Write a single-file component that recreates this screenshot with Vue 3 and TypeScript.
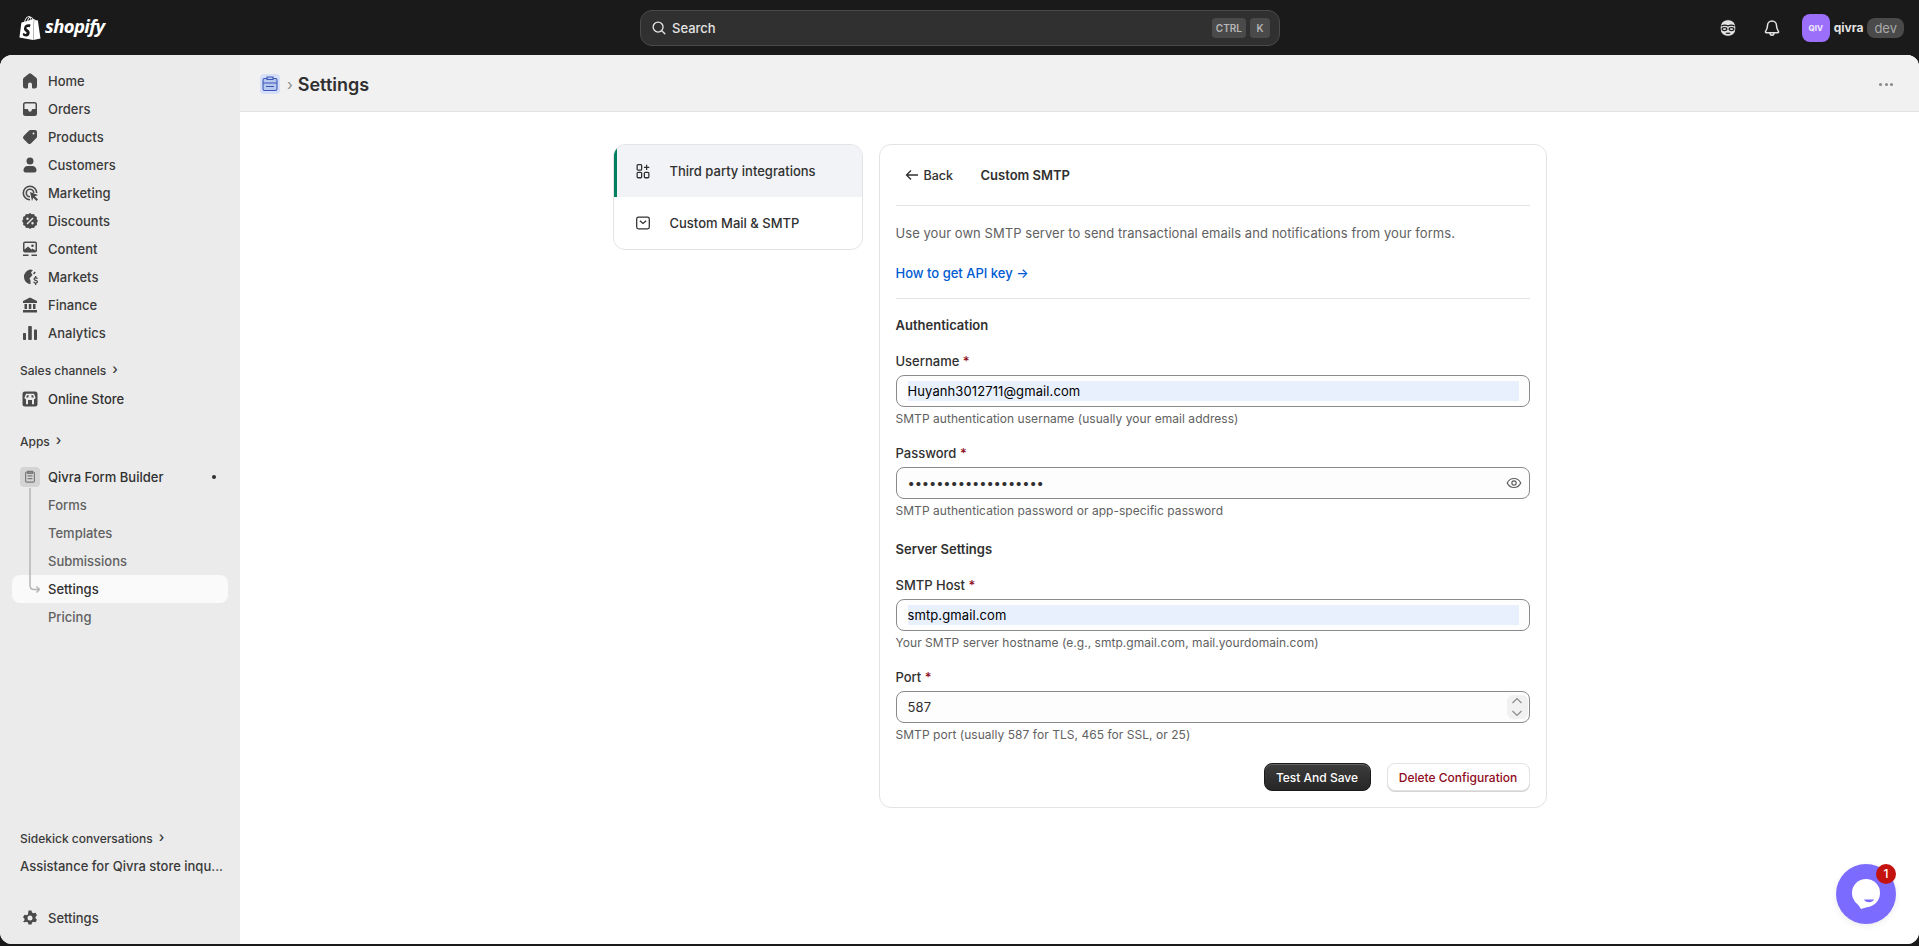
<template>
  <div class="shell">
    <header class="topbar">
      <div class="brand">
        <svg class="bag" viewBox="0 0 24 24"><path d="M15.337 23.979l7.216-1.561s-2.604-17.613-2.625-17.73c-.018-.116-.114-.192-.211-.192s-1.929-.136-1.929-.136-1.275-1.274-1.439-1.411c-.045-.037-.075-.057-.121-.074l-.914 21.104h.023zM11.71 11.305s-.81-.424-1.774-.424c-1.447 0-1.504.906-1.504 1.141 0 1.232 3.24 1.715 3.24 4.629 0 2.295-1.44 3.76-3.406 3.76-2.354 0-3.54-1.465-3.54-1.465l.646-2.086s1.245 1.066 2.28 1.066c.675 0 .975-.545.975-.932 0-1.619-2.654-1.694-2.654-4.359-.034-2.237 1.571-4.416 4.827-4.416 1.257 0 1.875.361 1.875.361l-.945 2.715-.02.01zM11.17.83c.136 0 .271.038.405.135-.984.465-2.064 1.639-2.508 3.992-.656.213-1.293.405-1.889.578C7.697 3.75 8.951.84 11.17.84V.83zm1.235 2.949v.135c-.754.232-1.583.484-2.394.736.466-1.777 1.333-2.645 2.085-2.971.193.501.309 1.176.309 2.1zm.539-2.234c.694.074 1.141.867 1.429 1.755-.349.114-.735.231-1.158.366v-.252c0-.752-.096-1.371-.271-1.871v.002zm2.992 1.289c-.02 0-.06.021-.078.021s-.289.075-.714.21c-.423-1.233-1.176-2.37-2.508-2.37h-.115C12.135.209 11.669 0 11.265 0 8.159 0 6.675 3.877 6.21 5.846c-1.194.365-2.063.636-2.16.674-.675.213-.694.232-.772.87-.075.462-1.83 14.063-1.83 14.063L15.009 24l.927-21.166z" /></svg>
        <span class="wordmark">shopify</span>
      </div>
      <div class="search">
        <svg class="search-icon" viewBox="0 0 20 20"><circle cx="9" cy="9" r="5.500" /><path d="M13 13l3.500 3.500" /></svg>
        <span class="search-text">Search</span>
        <kbd class="key">CTRL</kbd>
        <kbd class="key">K</kbd>
      </div>
      <div class="top-right">
        <svg class="face" viewBox="0 0 20 20">
          <rect x="2.800" y="2.500" width="14.400" height="15" rx="6.500" fill="#e3e3e3" />
          <path d="M4 8.200c2.200-1.200 4-1.200 6 0 2-1.200 3.800-1.200 6 0" />
          <ellipse cx="6.800" cy="11" rx="2.200" ry="1.400" />
          <ellipse cx="13.200" cy="11" rx="2.200" ry="1.400" />
          <path d="M8 14.800h4" />
        </svg>
        <svg class="bell" viewBox="0 0 20 20"><path d="M10 3a4.500 4.500 0 0 0-4.500 4.500c0 3.500-1.500 5-2 6-.3.700.2 1.200.8 1.200h11.400c.6 0 1.100-.5.8-1.200-.5-1-2-2.500-2-6A4.500 4.500 0 0 0 10 3z" /><path d="M8 15c0 1.300.9 2.200 2 2.200s2-.9 2-2.200" /></svg>
        <div class="avatar">QIV</div>
        <span class="store">qivra</span>
        <span class="dev">dev</span>
      </div>
    </header>

    <div class="frame">
      <aside class="sidebar">
        <a v-for="item in mainNav" :key="item.label" class="nav-item">
          <svg class="nav-icon" viewBox="0 0 20 20"><path fill-rule="evenodd" :d="item.d" /></svg>
          {{ item.label }}
        </a>

        <div class="nav-head sales">Sales channels <span class="head-arrow">›</span></div>
        <a class="nav-item strong">
          <svg class="nav-icon" viewBox="0 0 20 20"><path fill-rule="evenodd" d="M5 2.500h10A2.500 2.500 0 0 1 17.500 5v10a2.500 2.500 0 0 1-2.500 2.500H5A2.500 2.500 0 0 1 2.500 15V5A2.500 2.500 0 0 1 5 2.500zM6 4.800 4.500 8.500c0 1 .8 1.700 1.500 1.700V15.200h8V10.200c.7 0 1.500-.7 1.500-1.700L14 4.800zM7 6.200h1.700L8.300 8.600H6.100zM11.300 6.200H13l.9 2.400h-2.200zM8 11h4v4.200H8z" /></svg>
          Online Store
        </a>

        <div class="nav-head apps">Apps <span class="head-arrow">›</span></div>
        <div class="app-group">
          <a class="nav-item strong">
            <span class="app-icon">
              <svg viewBox="0 0 20 20"><rect x="4.500" y="4" width="11" height="12.500" rx="1.500" /><path d="M7 3h6v2.500H7zM7 8.500h6M7 12h6" /></svg>
            </span>
            Qivra Form Builder
            <span class="pin"></span>
          </a>
          <a v-for="sub in subNav" :key="sub" class="nav-item sub" :class="{ active: sub === 'Settings' }">{{ sub }}</a>
          <svg class="tree" viewBox="0 0 20 112" width="20" height="112"><path d="M10 0v97c0 3 1.500 4.500 4 4.500h5M16.500 98.500l3 3-3 3" /></svg>
        </div>

        <div class="nav-spacer"></div>

        <div class="nav-head">Sidekick conversations <span class="head-arrow">›</span></div>
        <div class="conversation">Assistance for Qivra store inqu...</div>
        <a class="nav-item settings-link">
          <svg class="nav-icon" viewBox="0 0 20 20"><path fill-rule="evenodd" d="M8.500 2.500h3l.5 2 1.500.8 2-.6 1.500 2.600-1.500 1.400v1.600l1.500 1.400-1.500 2.600-2-.6-1.500.8-.5 2h-3l-.5-2-1.500-.8-2 .6L3 13.700l1.500-1.400v-1.600L3 9.300l1.500-2.600 2 .6L8 6.500zM10 7.500a2.500 2.500 0 1 0 0 5 2.500 2.500 0 0 0 0-5z" /></svg>
          Settings
        </a>
      </aside>

      <main class="main">
        <div class="page-head">
          <span class="crumb-icon">
            <svg viewBox="0 0 20 20"><rect x="3" y="4.500" width="14" height="12" rx="1.500" /><path d="M7 3h6v2.500H7zM3 9h14M6 12.500h8" /></svg>
          </span>
          <span class="crumb-sep">›</span>
          <h1 class="page-title">Settings</h1>
          <span class="page-dots"><i></i><i></i><i></i></span>
        </div>

        <div class="content">
          <nav class="side-card">
            <a class="side-row current">
              <svg class="side-icon" viewBox="0 0 20 20"><rect x="3.500" y="3" width="5" height="6" rx="1" /><rect x="3.500" y="11.500" width="5" height="6" rx="1" /><rect x="11.500" y="11.500" width="5" height="6" rx="1" /><path d="M14 3v6M11 6h6" /></svg>
              Third party integrations
            </a>
            <a class="side-row">
              <svg class="side-icon" viewBox="0 0 20 20"><rect x="3" y="3.500" width="14" height="13" rx="2" /><path d="M6.500 7.500 10 10.500l3.500-3" /></svg>
              Custom Mail &amp; SMTP
            </a>
          </nav>

          <section class="card">
            <div class="card-head">
              <a class="back">
                <svg viewBox="0 0 16 16"><path d="M14 8H2.500M7 3.500 2.500 8 7 12.500" /></svg>
                Back
              </a>
              <h2 class="card-title">Custom SMTP</h2>
            </div>

            <p class="intro">Use your own SMTP server to send transactional emails and notifications from your forms.</p>
            <a class="api-link">How to get API key →</a>
            <hr class="rule" />

            <h3 class="section first">Authentication</h3>
            <div class="field">
              <label class="label">Username <span class="req">*</span></label>
              <div class="input-box"><input class="input filled" value="Huyanh3012711@gmail.com" readonly /></div>
              <div class="help">SMTP authentication username (usually your email address)</div>
            </div>
            <div class="field">
              <label class="label">Password <span class="req">*</span></label>
              <div class="input-box">
                <input class="input secret" type="password" value="Huyanh3012711passwd" readonly />
                <svg class="eye" viewBox="0 0 20 20"><path d="M2.500 10C4 6.800 6.700 5 10 5s6 1.800 7.500 5c-1.500 3.200-4.200 5-7.500 5s-6-1.800-7.500-5z" /><circle cx="10" cy="10" r="2.400" /></svg>
              </div>
              <div class="help">SMTP authentication password or app-specific password</div>
            </div>

            <h3 class="section">Server Settings</h3>
            <div class="field">
              <label class="label">SMTP Host <span class="req">*</span></label>
              <div class="input-box"><input class="input filled" value="smtp.gmail.com" readonly /></div>
              <div class="help">Your SMTP server hostname (e.g., smtp.gmail.com, mail.yourdomain.com)</div>
            </div>
            <div class="field">
              <label class="label">Port <span class="req">*</span></label>
              <div class="input-box">
                <input class="input" value="587" readonly />
                <span class="stepper">
                  <svg viewBox="0 0 12 12"><path d="M1.500 8 6 3.500 10.500 8" /></svg>
                  <svg viewBox="0 0 12 12"><path d="M1.500 4 6 8.500 10.500 4" /></svg>
                </span>
              </div>
              <div class="help">SMTP port (usually 587 for TLS, 465 for SSL, or 25)</div>
            </div>

            <div class="actions">
              <button class="btn btn-dark">Test And Save</button>
              <button class="btn btn-danger">Delete Configuration</button>
            </div>
          </section>
        </div>

        <div class="chat">
          <svg viewBox="0 0 60 60" width="60" height="60"><circle cx="30" cy="29" r="14" fill="#fff" /><path d="M21 39l4 6 10-3z" fill="#fff" /><path d="M28 35.500h10c-.8 1.800-2.800 2.800-5 2.800s-4.200-1-5-2.800z" fill="#7b6cff" /></svg>
          <span class="chat-badge">1</span>
        </div>
      </main>
    </div>
  </div>
</template>

<script setup lang="ts">
interface NavLink {
  label: string
  d: string
}

// polaris-like icons, drawn on a 20 box
const mainNav: NavLink[] = [
  { label: 'Home', d: 'M8.800 2.800a2 2 0 0 1 2.400 0l5 4c.5.400.8 1 .8 1.600V15a2.500 2.500 0 0 1-2.500 2.500H13a1 1 0 0 1-1-1V13.500a2 2 0 0 0-4 0v3a1 1 0 0 1-1 1H5.500A2.500 2.500 0 0 1 3 15V8.400c0-.6.300-1.200.8-1.600z' },
  { label: 'Orders', d: 'M5.500 3h9A2.500 2.500 0 0 1 17 5.500v9a2.500 2.500 0 0 1-2.500 2.500h-9A2.500 2.500 0 0 1 3 14.500v-9A2.500 2.500 0 0 1 5.500 3zM5.500 4.500a1 1 0 0 0-1 1V10h2.700c.6 0 1 .4 1.100 1a1.700 1.700 0 0 0 3.400 0c.1-.6.500-1 1.100-1h2.700V5.500a1 1 0 0 0-1-1z' },
  { label: 'Products', d: 'M10.500 3H15a2 2 0 0 1 2 2v4.500c0 .5-.2 1-.6 1.400l-5.500 5.500a2 2 0 0 1-2.800 0l-4.500-4.500a2 2 0 0 1 0-2.800l5.500-5.500c.4-.4.900-.6 1.400-.6zM13.500 5.500a1 1 0 1 0 0 2 1 1 0 0 0 0-2z' },
  { label: 'Customers', d: 'M10 2.500a3.500 3.500 0 1 1 0 7 3.500 3.500 0 0 1 0-7zM7.500 11h5c2.200 0 4 1.800 4 4v.500c0 1.100-.9 2-2 2h-9c-1.100 0-2-.9-2-2V15c0-2.200 1.800-4 4-4z' },
  { label: 'Marketing', d: 'M10 2.500a7.500 7.500 0 0 1 7.500 7.500h-1.600A5.900 5.900 0 1 0 10 15.900v1.600A7.500 7.500 0 0 1 10 2.500zM10 5.500a4.500 4.500 0 0 1 4.500 4.500h-1.600A2.900 2.900 0 1 0 10 12.900v1.600a4.500 4.500 0 0 1 0-9zM10 9l8 3-3.200 1.200L18 16.500 16.500 18l-3.200-3.200L12 18z' },
  { label: 'Discounts', d: 'M10 2l1.800 1.200 2.200-.2.900 2 2 .9-.2 2.200L18 10l-1.200 1.800.2 2.200-2 .9-.9 2-2.200-.2L10 18l-1.800-1.200-2.200.2-.9-2-2-.9.2-2.200L2 10l1.200-1.800L3 6l2-.9.9-2 2.200.2zM12.500 6.500 6.500 12.500l1 1 6-6zM7.500 6.500a1.200 1.200 0 1 0 0 2.400 1.200 1.200 0 0 0 0-2.400zM12.500 11.100a1.200 1.200 0 1 0 0 2.400 1.200 1.200 0 0 0 0-2.400z' },
  { label: 'Content', d: 'M5 2.500h10A2 2 0 0 1 17 4.500v7a2 2 0 0 1-2 2H5a2 2 0 0 1-2-2v-7a2 2 0 0 1 2-2zM4.500 10.500 8 7.500l3.500 3 1-1 3 2v-7a.5.5 0 0 0-.5-.5H5a.5.5 0 0 0-.5.5zM12.500 5.500a1.300 1.300 0 1 0 0 2.600 1.300 1.300 0 0 0 0-2.600zM3 15.500h5.500V17H3zM11.500 15.500H17V17h-5.500z' },
  { label: 'Markets', d: 'M10 2.500c1 0 2 .2 2.900.6L11 5.500l1.500 2.500-3 3.500 1 2v3.800A7.500 7.500 0 0 1 10 2.500zM14.600 4.500 15.800 5.500 14 7.500l-1-1.200zM15 9h1.300v1.200c.9.200 1.500.7 1.700 1.400l-1.200.5c-.2-.4-.5-.7-1.100-.7-.6 0-.9.200-.9.600 0 .4.400.5 1 .7 1 .3 2.200.7 2.200 2 0 1-.7 1.600-1.700 1.800V18H15v-1.500c-.9-.2-1.600-.8-1.800-1.600l1.200-.5c.2.600.6 1 1.300 1 .6 0 1-.3 1-.7 0-.5-.5-.6-1.200-.8-1-.3-2-.7-2-1.900 0-1 .7-1.600 1.500-1.800z' },
  { label: 'Finance', d: 'M10 2.500l7 3.500v2H3V6zM4.500 9h2.500v5H4.500zM8.800 9h2.500v5H8.800zM13 9h2.500v5H13zM3 15h14v2.500H3z' },
  { label: 'Analytics', d: 'M9 3h2a.8.800 0 0 1 .8.800v12.400a.8.800 0 0 1-.8.800H9a.8.800 0 0 1-.8-.8V3.800A.8.800 0 0 1 9 3zM14.800 6.500h1.400a.8.800 0 0 1 .8.800v8.900a.8.800 0 0 1-.8.800h-1.400a.8.800 0 0 1-.8-.8V7.300a.8.800 0 0 1 .8-.8zM3.800 10h1.400a.8.800 0 0 1 .8.800v5.400a.8.800 0 0 1-.8.800H3.800a.8.800 0 0 1-.8-.8v-5.400a.8.800 0 0 1 .8-.8z' }
]

const subNav: string[] = ['Forms', 'Templates', 'Submissions', 'Settings', 'Pricing']
</script>

<style>
html, body { margin: 0; height: 100%; overflow: hidden; background: #1a1a1a; }
</style>

<style scoped>
.shell { height: 946px; display: flex; flex-direction: column; background: #1a1a1a; font-family: Inter, "Noto Sans", sans-serif; font-size: 13px; color: #303030; }

.topbar { height: 55px; flex: none; display: flex; align-items: center; position: relative; padding: 0 15px 0 20px; }
.brand { display: flex; align-items: center; gap: 3px; width: 620px; color: #fff; }
.bag { width: 24px; height: 24px; fill: #fff; margin-left: -2px; }
.wordmark { font-family: "Open Sans", sans-serif; font-style: italic; font-weight: 700; font-size: 18.500px; letter-spacing: -0.6px; margin-top: -4px; }
.search { width: 640px; height: 36px; box-sizing: border-box; background: #303030; border: 1px solid #4a4a4a; border-radius: 12px; display: flex; align-items: center; gap: 4px; padding: 0 9px 0 9px; color: #e3e3e3; }
.search-icon { width: 18px; height: 18px; fill: none; stroke: #e3e3e3; stroke-width: 1.500; stroke-linecap: round; }
.search-text { flex: 1; font-size: 13px; font-weight: 500; }
.key { font-family: Inter, sans-serif; font-size: 10px; font-weight: 600; color: #b5b5b5; background: #4a4a4a; height: 20px; line-height: 20px; padding: 0 4px; border-radius: 4px; min-width: 12px; text-align: center; margin-left: 0; }
.top-right { margin-left: auto; display: flex; align-items: center; color: #e3e3e3; }
.face { width: 22px; height: 22px; fill: none; stroke: #1a1a1a; stroke-width: 1.100; margin-right: 23px; }
.bell { width: 20px; height: 20px; fill: none; stroke: #e3e3e3; stroke-width: 1.500; margin-right: 20px; }
.avatar { width: 28px; height: 28px; border-radius: 8px; background: #9c6ffb; color: #f3eeff; font-size: 8px; font-weight: 700; display: flex; align-items: center; justify-content: center; }
.store { margin-left: 4px; font-size: 12px; font-weight: 650; color: #e3e3e3; }
.dev { margin-left: 4px; background: #4a4a4a; color: #a9a9a9; height: 20px; line-height: 20px; padding: 0 7px; border-radius: 8px; }

.frame { flex: 1; display: flex; margin-bottom: 2px; border-radius: 12px; overflow: hidden; background: #fff; }

.sidebar { width: 240px; flex: none; box-sizing: border-box; background: #ebebeb; padding: 12px 12px 12px; display: flex; flex-direction: column; }
.nav-item { height: 28px; flex: none; box-sizing: border-box; display: flex; align-items: center; gap: 8px; padding: 0 8px; border-radius: 8px; font-weight: 500; color: #3a3a3a; }
.nav-item.strong { font-weight: 550; color: #303030; }
.nav-icon { width: 20px; height: 20px; flex: none; fill: #4a4a4a; }
.nav-head { height: 28px; flex: none; display: flex; align-items: center; gap: 6px; padding: 0 8px; font-size: 12px; font-weight: 550; color: #3a3a3a; }
.head-arrow { font-size: 14px; line-height: 14px; margin-top: -2px; }
.sales { margin-top: 9px; margin-bottom: 1px; }
.apps { margin-top: 14px; margin-bottom: 8px; }
.app-group { position: relative; display: flex; flex-direction: column; }
.app-icon { width: 16px; height: 16px; padding: 2px; background: #d4d4d4; border-radius: 4px; display: block; flex: none; }
.app-icon svg { width: 16px; height: 16px; display: block; fill: none; stroke: #7a7a7a; stroke-width: 1.500; }
.pin { width: 4px; height: 4px; border-radius: 50%; background: #303030; margin-left: auto; margin-right: 4px; }
.sub { padding-left: 36px; color: #616161; font-weight: 450; }
.sub.active { background: #fafafa; color: #303030; font-weight: 550; }
.tree { position: absolute; left: 8px; top: 25px; fill: none; stroke: #b5b5b5; stroke-width: 1.500; }
.nav-spacer { flex: 1; }
.conversation { height: 28px; flex: none; line-height: 28px; padding: 0 8px; font-weight: 500; white-space: nowrap; color: #3a3a3a; }
.settings-link { margin-top: 24px; }

.main { flex: 1; min-width: 0; position: relative; background: #fff; }
.page-head { height: 54px; padding: 2px 26px 0 20px; border-bottom: 1px solid #e3e3e3; background: #f1f1f1; display: flex; align-items: center; }
.crumb-icon { width: 20px; height: 20px; background: #d5e0f8; border-radius: 4px; display: block; }
.crumb-icon svg { width: 20px; height: 20px; fill: #b8c9f0; stroke: #3b55b8; stroke-width: 1.100; display: block; }
.crumb-sep { margin: 0 5px 0 7px; color: #8a8a8a; font-size: 15px; }
.page-title { margin: 0; font-size: 18px; font-weight: 600; color: #303030; }
.page-dots { margin-left: auto; display: flex; gap: 2.500px; }
.page-dots i { width: 3px; height: 3px; border-radius: 50%; background: #8a8a8a; }

.content { display: flex; justify-content: center; align-items: flex-start; gap: 16px; padding-top: 32px; }
.side-card { width: 250px; box-sizing: border-box; border: 1px solid #e3e3e3; border-radius: 12px; background: #fff; overflow: hidden; }
.side-row { height: 52px; box-sizing: border-box; display: flex; align-items: center; gap: 18px; padding-left: 20px; color: #303030; font-weight: 500; }
.side-row.current { background: #f1f3f6; border-left: 3px solid #008060; padding-left: 17px; }
.side-icon { width: 18px; height: 18px; fill: none; stroke: #303030; stroke-width: 1.400; flex: none; }

.card { width: 668px; box-sizing: border-box; border: 1px solid #e3e3e3; border-radius: 12px; background: #fff; padding: 16px; }
.card-head { display: flex; align-items: center; height: 28px; padding-bottom: 16px; border-bottom: 1px solid #e3e3e3; }
.back { display: flex; align-items: center; gap: 4px; width: 85px; padding-left: 8px; box-sizing: border-box; font-size: 12.500px; font-weight: 500; color: #303030; }
.back svg { width: 16px; height: 16px; fill: none; stroke: #303030; stroke-width: 1.300; }
.card-title { margin: 0; font-size: 13px; font-weight: 600; color: #303030; }
.intro { margin: 17px 0 0; line-height: 20px; color: #616161; letter-spacing: 0.05px; }
.api-link { display: block; margin-top: 20px; line-height: 20px; color: #005bd3; font-weight: 500; }
.rule { margin: 15px 0 0; border: 0; border-top: 1px solid #e3e3e3; }
.section { margin: 20px 0 0; font-size: 13px; line-height: 20px; font-weight: 600; color: #303030; }
.section.first { margin-top: 16px; }
.field { margin-top: 16px; }
.label { display: block; line-height: 20px; margin-bottom: 4px; color: #303030; font-weight: 450; }
.req { color: #8e0b21; }
.input-box { height: 32px; box-sizing: border-box; border: 1px solid #8a8a8a; border-radius: 8px; background: #fdfdfd; display: flex; align-items: center; padding: 0 10px 0 11px; }
.input { flex: 1; min-width: 0; height: 20px; border: 0; outline: 0; padding: 0; background: transparent; font-family: Inter, sans-serif; font-size: 13px; letter-spacing: 0.1px; color: #303030; }
.input.filled { background: #e8f0fe; color: #000; }
.input.secret { letter-spacing: -0.14px; }
.help { margin-top: 4px; font-size: 12px; line-height: 16px; color: #616161; letter-spacing: 0.04px; }
.eye { width: 18px; height: 18px; fill: none; stroke: #5c5c5c; stroke-width: 1.300; flex: none; margin-right: -4px; }
.stepper { width: 21px; height: 24px; background: #f1f1f1; border-radius: 6px; display: flex; flex-direction: column; align-items: center; justify-content: center; flex: none; margin-right: -9px; }
.stepper svg { width: 12px; height: 12px; fill: none; stroke: #8a8a8a; stroke-width: 1.100; }
.actions { display: flex; justify-content: flex-end; gap: 16px; margin-top: 20px; }
.btn { height: 28px; border-radius: 8px; font-family: Inter, sans-serif; font-size: 12px; font-weight: 550; padding: 0; }
.btn-dark { width: 107px; border: 1px solid #1a1a1a; color: #fff; background: linear-gradient(#3d3d3d, #262626); box-shadow: inset 0 1px 0 rgba(255,255,255,0.2); }
.btn-danger { width: 143px; border: 1px solid #e3e3e3; color: #8e0b21; background: #fff; box-shadow: 0 1px 0 #d4d4d4; }

.chat { position: absolute; right: 23px; bottom: 20px; width: 60px; height: 60px; border-radius: 50%; background: #7b6cff; box-shadow: 0 2px 6px rgba(0,0,0,0.08); }
.chat svg { display: block; }
.chat-badge { position: absolute; right: 0; top: 0; width: 20px; height: 20px; border-radius: 50%; background: #c4120f; color: #fff; font-size: 12px; line-height: 20px; text-align: center; font-weight: 500; }
</style>
